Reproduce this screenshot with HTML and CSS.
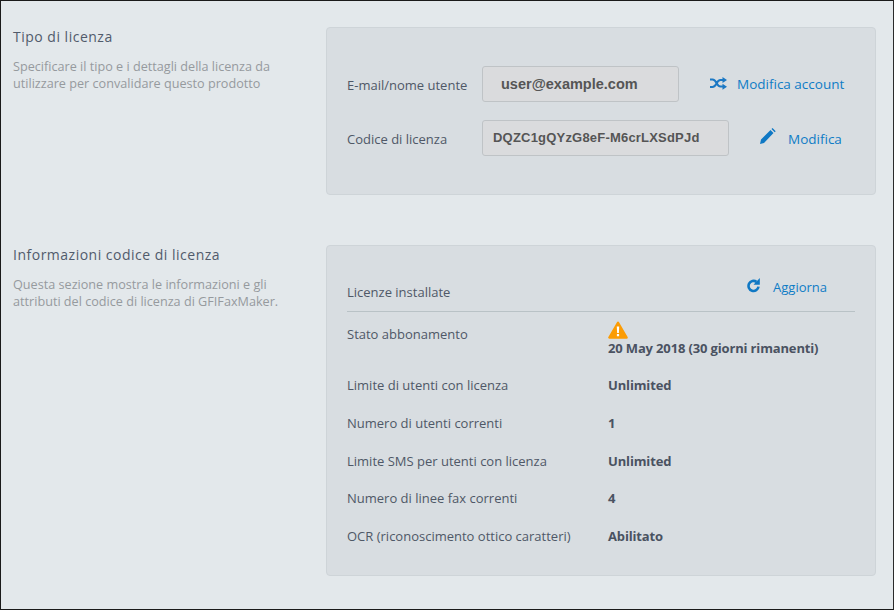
FILE: index.html
```html
<!DOCTYPE html>
<html lang="it">
<head>
<meta charset="utf-8">
<title>Licenza</title>
<link rel="stylesheet" href="styles.css">
</head>
<body>
<main class="frame">
  <section class="section section-type">
    <div class="intro">
      <h2>Tipo di licenza</h2>
      <p>Specificare il tipo e i dettagli della licenza da utilizzare per convalidare questo prodotto</p>
    </div>
    <div class="panel panel-type">
      <div class="form-row row-user">
        <label class="form-label">E-mail/nome utente</label>
        <div class="field field-user">user@example.com</div>
        <a class="action action-account"><svg class="icon" width="17" height="13" viewBox="0 0 17 13"><path fill="none" stroke="#1b78c4" stroke-width="2" d="M0 2.500h2.500c2 0 3 1.500 4 3.500s2 3.500 4 3.500h2.500M0 10h2.500c2 0 3-1.500 4-3.500s2-3.500 4-3.500h2.500"/><path fill="#1b78c4" d="M12.500 0L17 3l-4.500 3zM12.500 6.800L17 9.800l-4.500 3z"/></svg><span>Modifica account</span></a>
      </div>
      <div class="form-row row-code">
        <label class="form-label">Codice di licenza</label>
        <div class="field field-code">DQZC1gQYzG8eF-M6crLXSdPJd</div>
        <a class="action action-edit"><svg class="icon" width="16" height="16" viewBox="0 0 16 16"><path fill="#0f78c4" d="M0 16l1-4.500L10.500 2l3 3L4 15zM11.500 1L12.500 0l3.200 3.200-1 1z"/></svg><span>Modifica</span></a>
      </div>
    </div>
  </section>
  <section class="section">
    <div class="intro">
      <h2>Informazioni codice di licenza</h2>
      <p>Questa sezione mostra le informazioni e gli attributi del codice di licenza di GFIFaxMaker.</p>
    </div>
    <div class="panel panel-info">
      <div class="info-head">
        <span>Licenze installate</span>
        <a class="action action-refresh"><svg class="icon" width="14" height="15" viewBox="0 0 14 15"><path fill="none" stroke="#0f78c4" stroke-width="2.600" d="M11.500 8.600A5 5 0 1 1 9.500 3.900"/><path fill="#0f78c4" d="M12.800 0v6.700H6.500z"/></svg><span>Aggiorna</span></a>
      </div>
      <dl class="info-list">
        <div class="info-row row-status">
          <dt>Stato abbonamento</dt>
          <dd><svg class="warn" width="20" height="18" viewBox="0 0 20 18"><path fill="#fb9c05" stroke="#fb9c05" stroke-width="2.400" stroke-linejoin="round" d="M10 1.800L1.400 16.500h17.200z"/><path fill="#fff" d="M8.800 5.500h2.400l-.3 6.500H9.100zM8.900 13h2.200v2.300H8.900z"/></svg><span>20 May 2018 (30 giorni rimanenti)</span></dd>
        </div>
        <div class="info-row"><dt>Limite di utenti con licenza</dt><dd>Unlimited</dd></div>
        <div class="info-row"><dt>Numero di utenti correnti</dt><dd>1</dd></div>
        <div class="info-row"><dt>Limite SMS per utenti con licenza</dt><dd>Unlimited</dd></div>
        <div class="info-row"><dt>Numero di linee fax correnti</dt><dd>4</dd></div>
        <div class="info-row"><dt>OCR (riconoscimento ottico caratteri)</dt><dd>Abilitato</dd></div>
      </dl>
    </div>
  </section>
</main>
</body>
</html>
```
FILE: styles.css
```css
* { box-sizing: border-box; }
html, body { margin: 0; padding: 0; }
body {
  width: 894px;
  height: 610px;
  overflow: hidden;
  font-family: "Open Sans", sans-serif;
  font-size: 13px;
  color: #4f5867;
}
.frame {
  width: 894px;
  height: 610px;
  border: 1px solid #1a1a1a;
  border-right-color: #2a2a2a;
  background: #e3e8eb;
  padding: 26px 18px 0 12px;
}
.section { display: flex; }
.section-type { margin-bottom: 50px; }
.intro { width: 313px; flex: none; }
.intro h2 {
  margin: 0;
  font-size: 14px;
  font-weight: 400;
  line-height: 20px;
  letter-spacing: .5px;
  color: #515b6b;
}
.intro p {
  margin: 11px 0 0;
  width: 270px;
  font-size: 12.650px;
  line-height: 17px;
  color: #969a9e;
}
.panel {
  flex: none;
  width: 550px;
  background: #d8dde1;
  border: 1px solid #ced4d8;
  border-radius: 4px;
}
.panel-type { height: 168px; padding: 38px 20px 0; }
.form-row { display: flex; align-items: center; }
.row-user { height: 36px; margin-bottom: 18px; }
.row-code { height: 36px; }
.form-label { width: 135px; flex: none; padding-top: 2px; }
.field {
  height: 36px;
  background: #dadbdd;
  border: 1px solid #bfc3c6;
  border-radius: 3px;
  font-family: "Liberation Sans", sans-serif;
  font-weight: 700;
  color: #555;
  display: flex;
  align-items: center;
}
.field-user { width: 197px; padding: 0 0 1px 18px; font-size: 14.500px; }
.field-code { width: 247px; padding: 0 0 1px 10px; font-size: 13px; letter-spacing: .2px; }
.action { display: flex; align-items: center; color: #0f7cc6; }
.action-account, .action-edit { font-size: 13.500px; }
.action-account { margin-left: 31px; }
.action-account .icon { margin-right: 10px; margin-top: -1px; }
.action-edit { margin-left: 31px; margin-top: 2px; }
.action-edit .icon { margin-right: 12px; margin-top: -7px; }
.panel-info { height: 331px; padding: 0 20px; }
.info-head {
  height: 66px;
  border-bottom: 1px solid #b9c2c6;
  display: flex;
  justify-content: space-between;
  align-items: flex-start;
  padding-right: 28px;
}
.info-head > span { margin-top: 37px; line-height: 18px; }
.action-refresh { margin-top: 32px; line-height: 18px; }
.action-refresh .icon { margin-right: 12px; margin-top: -3px; }
.info-list { margin: 0; }
.info-row { display: flex; height: 37.750px; align-items: flex-start; line-height: 18px; }
.row-status { height: 64px; padding-top: 13px; }
.info-row dt { width: 261px; flex: none; }
.info-row dd { margin: 0; font-weight: 700; letter-spacing: -.15px; color: #4a5261; display: flex; flex-direction: column; align-items: flex-start; }
.warn { margin-top: -4px; margin-bottom: 0; }
```
